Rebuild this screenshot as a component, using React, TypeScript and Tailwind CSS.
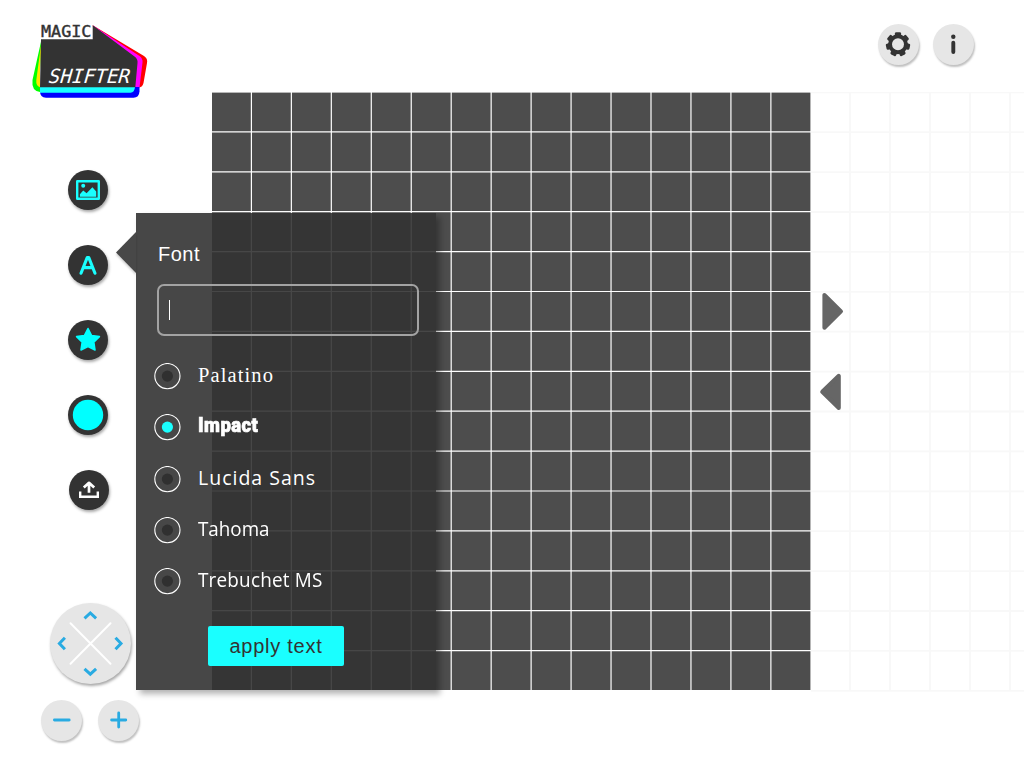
import type { ReactNode } from 'react';

const FONTS = [
  { name: 'Palatino', cls: "font-['Liberation_Serif'] text-[20.5px] tracking-[1.1px] -top-px" },
  { name: 'Impact', cls: "font-[Roboto] font-black text-[21px] tracking-[0.5px] scale-x-[0.88] origin-left -top-[2px] [-webkit-text-stroke:0.7px_white]" },
  { name: 'Lucida Sans', cls: "font-['Open_Sans'] text-[19.5px] tracking-[1px] -top-[2px]" },
  { name: 'Tahoma', cls: "font-['Open_Sans'] text-[19.5px] scale-x-[0.965] origin-left -top-[2px]" },
  { name: 'Trebuchet MS', cls: "font-['Open_Sans'] text-[19.5px] tracking-[0.2px] scale-x-[0.97] origin-left -top-[2px]" },
];

const range = (n: number) => Array.from({ length: n }, (_, i) => i);

function Logo() {
  return (
    <svg className="block" width="120" height="80" viewBox="30 20 120 80">
      <path d="M92.7 25.3 L144 56 Q148 58.5 147 63 L143.5 83 Q142.5 87.5 138 87.5 L100 87.5Z" fill="#ff0000" />
      <path d="M93 25.5 L139.5 56 Q143 58.5 142.5 62.5 L139.5 87.5 H100Z" fill="#ff00ff" />
      <path d="M40 87 H139.5 V91.5 Q139 97.7 133.5 97.7 H46 Q40 97.7 40 91Z" fill="#0000ff" />
      <path d="M40 87 H135 Q134.5 92.7 130.5 92.7 H40Z" fill="#1affff" />
      <path d="M41.5 39.5 L32.5 80 Q31.3 91 40 92V70Z" fill="#00ff00" />
      <path d="M41.5 41 L36.3 80 Q35.8 86 40 87.3V70Z" fill="#ffe600" />
      <path d="M41 39.3 H92.7 V25.3 L134.5 56.5 Q138 59 137.5 63 L135.3 87.3 H40Z" fill="#333333" />
      <text x="41" y="36.8" textLength="50.4" lengthAdjust="spacingAndGlyphs" className="font-['DejaVu_Sans_Mono'] text-[15.5px]" fill="#333333" stroke="#333333" strokeWidth="0.4">MAGIC</text>
      <text transform="translate(47 82.8) skewX(-16)" textLength="81.5" className="font-['DejaVu_Sans_Mono'] text-[19.5px]" lengthAdjust="spacingAndGlyphs" fill="#ffffff">SHIFTER</text>
    </svg>
  );
}

function ToolButton({ children, label, className = '' }: { children: ReactNode; label: string; className?: string }) {
  return (
    <button aria-label={label} className={`size-10 rounded-full bg-[#333] shadow-[1px_2px_3px_rgba(0,0,0,0.35)] ${className}`}>
      <svg width="40" height="40" viewBox="0 0 40 40" fill="none">{children}</svg>
    </button>
  );
}

function LightButton({ children, label }: { children: ReactNode; label: string }) {
  return (
    <button aria-label={label} className="size-[41px] rounded-full bg-[#e6e6e6] shadow-[1px_2px_2px_rgba(0,0,0,0.25)]">
      <svg width="41" height="41" viewBox="0 0 41 41" fill="none">{children}</svg>
    </button>
  );
}

function FontPanel() {
  return (
    <section className="absolute left-[136px] top-[213px] flex h-[477px] w-[300px] flex-col bg-[#333]/90 pl-[21px] text-white shadow-[4px_4px_6px_rgba(0,0,0,0.3)]">
      <svg className="absolute -left-5 top-[19px] overflow-visible drop-shadow-[0_2px_1px_rgba(0,0,0,0.2)]" width="20" height="42">
        <path d="M20 0 L0 20.5 L20 41Z" fill="#484848" />
      </svg>
      <h2 className="mt-[29px] h-6 pl-px font-['Liberation_Sans'] text-[20px] leading-6 tracking-[0.5px]">Font</h2>
      <div className="mt-[18px] flex h-[52px] w-[262px] items-center rounded-[7px] border-2 border-[#a3a3a3] pl-[10px]">
        <span className="h-5 w-px bg-white" />
      </div>
      <ul className="-ml-[3px] mt-[15px]">
        {FONTS.map((f) => (
          <li key={f.name} className="flex h-[51.25px] items-center">
            <svg width="27" height="27" viewBox="0 0 27 27">
              <circle cx="13.4" cy="13.1" r="12.6" fill="none" stroke="#fff" strokeWidth="1.1" />
              <circle cx="13.4" cy="13.1" r="5.6" fill={f.name === 'Impact' ? '#1affff' : '#303030'} />
            </svg>
            <span className={`relative ml-[17px] whitespace-nowrap ${f.cls}`}>{f.name}</span>
          </li>
        ))}
      </ul>
      <button className="ml-[51px] mt-[18.7px] h-10 w-[136px] whitespace-nowrap rounded-[2px] bg-[#1affff] font-['Liberation_Sans'] text-[20px] tracking-[0.75px] text-[#333]">
        apply text
      </button>
    </section>
  );
}

export default function App() {
  return (
    <div className="relative flex h-[768px] w-[1024px] overflow-hidden bg-white">
      <aside className="flex w-[212px] shrink-0 flex-col">
        <div className="h-[170px] pl-[30px] pt-5"><Logo /></div>
        <nav className="flex h-[340px] flex-col justify-between pl-[68px]">
          <ToolButton label="Image">
            <rect x="9.2" y="11.2" width="21.6" height="17.6" stroke="#1affff" strokeWidth="2.4" strokeLinejoin="round" />
            <circle cx="15.2" cy="15.8" r="2" fill="#1affff" />
            <path d="M11.9 26.7 V24.2 L15.2 20.6 L18.6 23.2 L24.4 17.2 L28.2 21.4 V26.7Z" fill="#1affff" />
          </ToolButton>
          <ToolButton label="Text">
            <path d="M13 28.2 L19.2 12.6 H20.8 L27 28.2 M15.4 22.6 H24.8" stroke="#1affff" strokeWidth="3.1" strokeLinecap="round" strokeLinejoin="round" />
          </ToolButton>
          <ToolButton label="Stamp">
            <path d="M20 8.5 L23.6 15.5 L31.4 16.6 L25.8 22.1 L27 30 L20 26.6 L13 30 L14.2 22.1 L8.6 16.6 L16.4 15.5Z" fill="#00ffff" stroke="#00ffff" strokeWidth="1.6" strokeLinejoin="round" />
          </ToolButton>
          <ToolButton label="Colour"><circle cx="20" cy="20" r="15.2" fill="#00ffff" /></ToolButton>
          <ToolButton label="Upload" className="ml-px">
            <path d="M11.2 21.5 V26.8 H28.8 V21.5" stroke="#fff" strokeWidth="2.4" />
            <path d="M20 22.8 V13.5 M14.8 17.6 L20 12.8 L25.2 17.6" stroke="#fff" strokeWidth="2.7" strokeLinejoin="round" />
          </ToolButton>
        </nav>
        <div className="ml-[50px] mt-[93px] size-[81px] rounded-full bg-[#e6e6e6] shadow-[1px_2px_3px_rgba(0,0,0,0.35)]">
          <svg width="81" height="81" viewBox="0 0 81 81" fill="none">
            <path d="M20.5 20.3 L60.5 60.7 M60.5 20.3 L20.5 60.7" stroke="#fff" strokeWidth="2" strokeLinecap="round" />
            <path d="M34.5 15.3 L40.3 10 L46.1 15.3 M34.5 65.9 L40.3 71.2 L46.1 65.9 M14.9 34.7 L9.4 40.5 L14.9 46.3 M65.5 34.7 L71 40.5 L65.5 46.3" stroke="#29abe2" strokeWidth="3" />
          </svg>
        </div>
        <div className="ml-[41px] mt-4 flex gap-4">
          <LightButton label="Zoom out"><path d="M13.4 20 H28.2" stroke="#29abe2" strokeWidth="2.8" strokeLinecap="round" /></LightButton>
          <LightButton label="Zoom in"><path d="M13.6 20 H27.8 M20.7 13 V27" stroke="#29abe2" strokeWidth="2.8" strokeLinecap="round" /></LightButton>
        </div>
      </aside>

      <main className="flex flex-1 flex-col">
        <header className="flex h-[92px] justify-end gap-[14px] pr-[50px] pt-6">
          <LightButton label="Settings">
            <g transform="translate(20 20.3)">
              <circle r="8" stroke="#333" strokeWidth="4" />
              {range(7).map((i) => (
                <rect key={i} x="-3.1" y="-12.1" width="6.2" height="5.5" rx="1.4" fill="#333" transform={`rotate(${(i * 360) / 7})`} />
              ))}
            </g>
          </LightButton>
          <LightButton label="Info">
            <circle cx="20.3" cy="12.7" r="2.2" fill="#333" />
            <path d="M20.3 18.8 V28" stroke="#333" strokeWidth="3.9" strokeLinecap="round" />
          </LightButton>
        </header>
        <div className="relative flex h-[600px]">
          <svg className="shrink-0" width="599" height="600" viewBox="0 0 599 600">
            <rect x="0" y="0.6" width="598.4" height="597.4" fill="#4d4d4d" />
            {range(14).map((i) => (
              <line key={`v${i}`} x1={39.4 + i * 39.96} x2={39.4 + i * 39.96} y1="0" y2="598" stroke="#fff" strokeWidth="1.2" />
            ))}
            {range(14).map((i) => (
              <line key={`h${i}`} y1={39.9 + i * 39.9} y2={39.9 + i * 39.9} x1="0" x2="599" stroke="#fff" strokeWidth="1.2" />
            ))}
          </svg>
          <svg className="shrink-0" width="213" height="600" viewBox="0 0 213 600">
            {range(5).map((i) => (
              <line key={`v${i}`} x1={39 + i * 40} x2={39 + i * 40} y1="0" y2="599" stroke="#f8f8f8" strokeWidth="2" />
            ))}
            {range(16).map((i) => (
              <line key={`h${i}`} y1={0.3 + i * 39.9} y2={0.3 + i * 39.9} x1="0" x2="213" stroke="#f8f8f8" strokeWidth="1.8" />
            ))}
          </svg>
          <svg className="absolute left-[606px] top-[198px]" width="28" height="124" viewBox="0 0 28 124">
            <g fill="#666" stroke="#666" strokeWidth="4" strokeLinejoin="round">
              <path d="M6.4 5 V37.8 L23 21.4Z" />
              <path d="M20.8 85.8 V118 L4.2 101.8Z" />
            </g>
          </svg>
        </div>
      </main>
      <FontPanel />
    </div>
  );
}
